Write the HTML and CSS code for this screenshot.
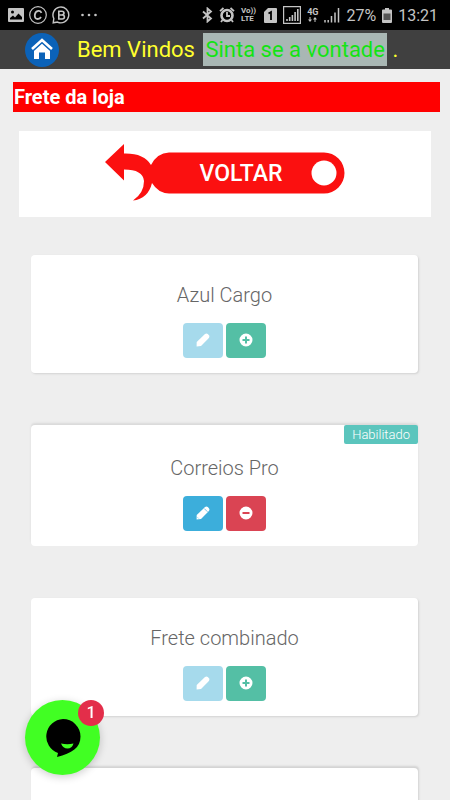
FILE: index.html
```
<!DOCTYPE html>
<html lang="pt-BR">
<head>
  <meta charset="UTF-8">
  <meta name="viewport" content="width=device-width, initial-scale=1">
  <title>Frete da loja</title>
  <link rel="stylesheet" href="styles.css">
</head>
<body>
  <!-- icons used by the cards -->
  <svg class="sprite" aria-hidden="true">
    <symbol id="pencil" viewBox="0 0 14 14">
      <path d="M.700 9L9 1.100Q10.500 0 11.800 1.100L12.900 2.200Q14 3.600 12.900 5L5 13L.600 13.600Z"/>
    </symbol>
    <symbol id="pencil-detail" viewBox="0 0 14 14">
      <path d="M.700 9L9 1.100Q10.500 0 11.800 1.100L12.900 2.200Q14 3.600 12.900 5L5 13L.600 13.600Z"/>
      <path d="M8.300 2.600l3.200 3.200M1.600 11.400l1 1" fill="none" stroke="#3caedb" stroke-width=".7"/>
    </symbol>
    <symbol id="plus" viewBox="0 0 14 14">
      <path fill-rule="evenodd" d="M7 .500a6.500 6.500 0 1 0 0 13a6.500 6.500 0 1 0 0-13zM6 3.500h2V6h2.500v2H8v2.500H6V8H3.500V6H6z"/>
    </symbol>
    <symbol id="minus" viewBox="0 0 14 14">
      <path fill-rule="evenodd" d="M7 .500a6.500 6.500 0 1 0 0 13a6.500 6.500 0 1 0 0-13zM3.500 6h7v2h-7z"/>
    </symbol>
  </svg>

  <div class="statusbar">
    <div class="status-left">
      <svg width="16" height="14" viewBox="0 0 16 14"><path fill="#c4c4c4" fill-rule="evenodd" d="M1 0h14q1 0 1 1v12q0 1-1 1H1q-1 0-1-1V1q0-1 1-1zM2 11.500h12V9L10.500 5.500L7 9.500L5 7.500L2 10zM4.500 2.500a1.500 1.500 0 1 0 0 3a1.500 1.500 0 1 0 0-3z"/></svg>
      <svg width="18" height="18" viewBox="0 0 18 18" fill="none" stroke="#c4c4c4"><circle cx="9" cy="9" r="8.300" stroke-width="1.200"/><path d="M12.500 6.800Q11.500 4.700 9.300 4.900Q6.200 5.300 5.800 9Q5.600 13 8.700 13Q11 13 12 11" stroke-width="1.800"/></svg>
      <svg width="18" height="18" viewBox="0 0 18 18" fill="none" stroke="#c4c4c4"><path d="M1.200 16.800L1.800 12.500A7.900 7.900 0 1 1 5.500 16.100z" stroke-width="1.400"/><path d="M6.800 5.300h3q2.200 0 2.200 1.800T9.800 9h-3h3.300q2.300 0 2.300 2t-2.300 2H6.800z" stroke-width="1.600"/></svg>
      <svg class="dots" width="16" height="4" viewBox="0 0 16 4" fill="#c4c4c4"><circle cx="1.500" cy="2" r="1.300"/><circle cx="8" cy="2" r="1.300"/><circle cx="14.500" cy="2" r="1.300"/></svg>
    </div>
    <div class="status-right">
      <svg width="11" height="16" viewBox="0 0 11 16" fill="none" stroke="#c4c4c4" stroke-width="1.800"><path d="M1 4.500L9 11.500L5.500 14.500V1.500L9 4.500L1 11.500"/></svg>
      <svg width="16" height="16" viewBox="0 0 16 16"><circle cx="8" cy="8.500" r="5.500" fill="none" stroke="#c4c4c4" stroke-width="2.600"/><path d="M8 5v4h3M1 4.200L4.500 1M15 4.200L11.500 1M3.500 13L2 15M12.500 13L14 15" fill="none" stroke="#c4c4c4" stroke-width="1.800"/></svg>
      <span class="volte">Vo))<br>LTE</span>
      <svg width="13" height="15" viewBox="0 0 13 15"><path fill="#c4c4c4" d="M4 0h8q1 0 1 1v13q0 1-1 1H1q-1 0-1-1V4z"/><path d="M4.500 5.500L7 4v8" fill="none" stroke="#000" stroke-width="1.800"/></svg>
      <svg width="18" height="18" viewBox="0 0 18 18"><path d="M.600.600h16.800v16.800H.600z" fill="none" stroke="#c4c4c4" stroke-width="1.200"/><path d="M4 15v-2M6.700 15v-4M9.400 15V9M12.100 15V6M14.800 15V3" stroke="#c4c4c4" stroke-width="1.600"/></svg>
      <span class="net">4G<svg width="9" height="5" viewBox="0 0 9 5" fill="#c4c4c4"><path d="M1.500 0h1v2.500H4L2 5L0 2.500h1.500zM6.500 5h1V2.500H9L7 0L5 2.500h1.500z"/></svg></span>
      <svg width="16" height="16" viewBox="0 0 16 16"><path d="M1 15.500v-2.500M4.200 15.500V13M7.500 15.500V9M11 15.500V5.500M14.500 15.500V1" stroke="#c4c4c4" stroke-width="1.500"/></svg>
      <span>27%</span>
      <svg width="10" height="15" viewBox="0 0 10 15"><path fill="#c4c4c4" d="M3 0h4v1.500h2q1 0 1 1V14q0 1-1 1H1q-1 0-1-1V2.500q0-1 1-1h2z"/><path fill="#555" d="M1.500 5.500h7v6.500h-7z"/></svg>
      <span>13:21</span>
    </div>
  </div>

  <header class="topbar">
    <a class="home" href="#" aria-label="Início">
      <svg width="34" height="34" viewBox="0 0 34 34">
        <circle cx="17" cy="17" r="17" fill="#0b62b8"/>
        <path d="M9 16L17 9L25 16V26H20V19.500H14V26H9z" fill="#fff"/>
        <path d="M6.500 17.500L17 8L27.500 17.500" fill="none" stroke="#0b62b8" stroke-width="4"/>
        <path d="M7 16L17 7L27 16" fill="none" stroke="#fff" stroke-width="2.600"/>
      </svg>
    </a>
    <p class="welcome">Bem Vindos <mark>Sinta se a vontade</mark> .</p>
  </header>

  <main>
    <h1>Frete da loja</h1>

    <a class="back" href="#">
      <svg width="240" height="60" viewBox="0 0 240 60" role="img" aria-label="Voltar">
        <path fill="#fb1010" d="M0 19L19 1V10.500Q39 10 46 22Q52 10 64 9.500H219A20.500 20.500 0 0 1 219 50.500H64Q53 50 47 40Q43 56 28 57.500Q39 50 39 38Q38 26.500 19 26.500V37.500z"/>
        <circle cx="219" cy="30" r="12.500" fill="#fff"/>
        <text class="back-text" x="136" y="38" text-anchor="middle">VOLTAR</text>
      </svg>
    </a>

    <div class="cards">
      <section class="card">
        <h2>Azul Cargo</h2>
        <div class="actions">
          <button class="btn edit-off" aria-label="Editar"><svg><use href="#pencil"/></svg></button>
          <button class="btn add" aria-label="Habilitar"><svg><use href="#plus"/></svg></button>
        </div>
      </section>

      <section class="card enabled">
        <span class="tag">Habilitado</span>
        <h2>Correios Pro</h2>
        <div class="actions">
          <button class="btn edit" aria-label="Editar"><svg><use href="#pencil-detail"/></svg></button>
          <button class="btn remove" aria-label="Desabilitar"><svg><use href="#minus"/></svg></button>
        </div>
      </section>

      <section class="card">
        <h2>Frete combinado</h2>
        <div class="actions">
          <button class="btn edit-off" aria-label="Editar"><svg><use href="#pencil"/></svg></button>
          <button class="btn add" aria-label="Habilitar"><svg><use href="#plus"/></svg></button>
        </div>
      </section>

      <section class="card empty"></section>
    </div>
  </main>

  <button class="chat" aria-label="Chat">
    <svg width="36" height="38" viewBox="0 0 36 38">
      <path d="M18 0A17.500 17.500 0 0 1 35.500 17.500C35.500 29 27 34 12 38L13 34A17.500 17.500 0 0 1 18 0z"/>
      <path fill="#41ff23" d="M16 24.500Q22.500 26 28.500 24.500Q27 29.500 22.500 29.500T16 24.500z"/>
    </svg>
    <span class="count">1</span>
  </button>
</body>
</html>
```
FILE: styles.css
```
* {
  box-sizing: border-box;
  margin: 0;
}

body {
  display: flex;
  flex-direction: column;
  height: 100vh;
  background: #eee;
  font-family: Roboto, sans-serif;
}

svg {
  display: block;
}

.sprite {
  position: absolute;
  width: 0;
  height: 0;
}

/* phone status bar */
.statusbar {
  display: flex;
  flex: none;
  justify-content: space-between;
  align-items: center;
  height: 30px;
  padding: 0 12px 0 8px;
  background: #000;
  color: #c4c4c4;
  font-size: 16px;
}

.status-left, .status-right {
  display: flex;
  align-items: center;
  gap: 5px;
}

.status-right {
  gap: 6px;
}

.dots {
  margin-left: 6px;
}

.volte {
  font-size: 8px;
  font-weight: 700;
  line-height: 8px;
  margin-right: 2px;
}

.net {
  display: flex;
  flex-direction: column;
  align-items: center;
  font-size: 9px;
  font-weight: 700;
  line-height: 9px;
}

/* header */
.topbar {
  display: flex;
  flex: none;
  align-items: center;
  gap: 18px;
  height: 39px;
  padding-left: 25px;
  background: #404040;
}

.welcome {
  color: #ffff2e;
  font-size: 22px;
  line-height: 33px;
  white-space: nowrap;
}

.welcome mark {
  display: inline-block;
  margin-left: 3px;
  padding: 0 2px;
  background: #a9b7b4;
  color: #14e314;
}

main {
  flex: 1;
  min-height: 0;
  overflow-y: auto;
  scrollbar-width: none;
  padding: 13px 10px 0 13px;
}

h1 {
  padding-left: 1px;
  background: #f00;
  color: #fff;
  font-size: 20px;
  font-weight: 700;
  line-height: 30px;
}

.back {
  display: flex;
  justify-content: center;
  margin: 19px 9px 38px 6px;
  padding: 12px 0 14px;
  background: #fff;
}

.back-text {
  fill: #fff;
  font-family: Roboto, sans-serif;
  font-size: 23px;
  font-weight: 500;
}

.cards {
  display: flex;
  flex-direction: column;
  gap: 52px;
  padding: 0 22px 0 18px;
}

.card {
  position: relative;
  padding: 28px 0 15px;
  border-radius: 4px;
  background: #fff;
  box-shadow: 1px 1px 2px #d2d2d2;
  text-align: center;
}

.card.enabled {
  padding-top: 31px;
  box-shadow: 0 -2px 2px #dadada;
}

.card.empty {
  min-height: 118px;
  box-shadow: 1px -2px 2px #d2d2d2;
}

h2 {
  color: #666;
  font-size: 20px;
  font-weight: 300;
  line-height: 24px;
}

.tag {
  position: absolute;
  top: 0;
  right: 0;
  padding: 0 8px;
  border-radius: 2px;
  background: #5bc5bd;
  color: #fff;
  font-size: 13px;
  font-weight: 300;
  line-height: 19px;
}

.actions {
  display: flex;
  justify-content: center;
  gap: 3px;
  margin-top: 16px;
}

.btn {
  display: flex;
  justify-content: center;
  align-items: center;
  width: 40px;
  height: 35px;
  padding: 0 0 2px;
  border: 0;
  border-radius: 4px;
  color: #fff;
}

.btn svg {
  width: 14px;
  height: 14px;
  fill: currentColor;
}

.edit-off {
  background: #a6daec;
}

.edit {
  background: #3caedb;
}

.add {
  background: #54bfa5;
}

.remove {
  background: #da4453;
}

/* chat bubble */
.chat {
  position: fixed;
  left: 25px;
  bottom: 25px;
  display: flex;
  justify-content: center;
  align-items: center;
  width: 75px;
  height: 75px;
  padding: 0;
  border: 0;
  border-radius: 50%;
  background: #41ff23;
  box-shadow: 0 2px 8px rgba(0, 0, 0, .2);
}

.count {
  position: absolute;
  top: 0;
  right: -4px;
  width: 26px;
  height: 26px;
  border-radius: 50%;
  background: #e32e4a;
  color: #fff;
  font: 500 16px/26px Roboto, sans-serif;
}
```
